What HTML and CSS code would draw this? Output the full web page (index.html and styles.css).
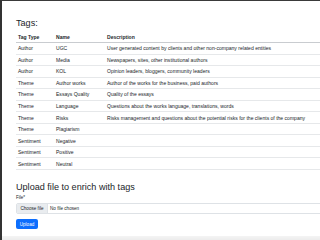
FILE: index.html
```html
<!DOCTYPE html>
<html>
<head>
<meta charset="utf-8">
<link rel="stylesheet" href="styles.css">
</head>
<body>
<div class="frame">
  <main class="page">
    <h3 class="title">Tags:</h3>
    <table class="tags">
      <thead>
        <tr><th>Tag Type</th><th>Name</th><th>Description</th></tr>
      </thead>
      <tbody>
        <tr><td>Author</td><td>UGC</td><td>User generated content by clients and other non-company related entities</td></tr>
        <tr><td>Author</td><td>Media</td><td>Newspapers, sites, other institutional authors</td></tr>
        <tr><td>Author</td><td>KOL</td><td>Opinion leaders, bloggers, community leaders</td></tr>
        <tr><td>Theme</td><td>Author works</td><td>Author of the works for the business, paid authors</td></tr>
        <tr><td>Theme</td><td>Essays Quality</td><td>Quality of the essays</td></tr>
        <tr><td>Theme</td><td>Language</td><td>Questions about the works language, translations, words</td></tr>
        <tr><td>Theme</td><td>Risks</td><td>Risks management and questions about the potential risks for the clients of the company</td></tr>
        <tr><td>Theme</td><td>Plagiarism</td><td></td></tr>
        <tr><td>Sentiment</td><td>Negative</td><td></td></tr>
        <tr><td>Sentiment</td><td>Positive</td><td></td></tr>
        <tr><td>Sentiment</td><td>Neutral</td><td></td></tr>
      </tbody>
    </table>
    <h3 class="title upload-title">Upload file to enrich with tags</h3>
    <form class="upload">
      <label class="label" for="file">File*</label>
      <div class="file-box">
        <span class="file-btn">Choose file</span>
        <span class="file-name">No file chosen</span>
      </div>
      <button class="btn" type="button">Upload</button>
    </form>
  </main>
  <div class="bottom-bar"></div>
</div>
</body>
</html>
```

FILE: styles.css
```css
html, body {
  margin: 0;
  padding: 0;
  width: 320px;
  height: 240px;
  overflow: hidden;
  background: #ffffff;
}
.frame {
  box-sizing: border-box;
  width: 320px;
  height: 240px;
  border-top: 1px solid #3a3a3a;
  border-left: 2px solid #333333;
  display: flex;
  flex-direction: column;
  font-family: "Liberation Sans", Arial, sans-serif;
  color: #212529;
}
.page {
  flex: 1;
  padding: 17px 0 0 14px;
}
.title {
  margin: 0;
  font-size: 9.1px;
  line-height: 11px;
  font-weight: 400;
}
.tags {
  display: grid;
  grid-template-columns: 38px 51px 1fr;
  width: 304px;
  margin-top: 2px;
  font-size: 5.05px;
}
.tags thead, .tags tbody, .tags tr {
  display: contents;
}
.tags th, .tags td {
  display: flex;
  align-items: center;
  padding: 0 2px;
  text-align: left;
  white-space: nowrap;
}
.tags th {
  height: 11px;
  font-weight: 700;
  border-bottom: 1px solid #c9ccd0;
}
.tags td {
  height: 10.55px;
  border-bottom: 1px solid #e6e8ea;
}
.upload-title {
  margin-top: 11.5px;
}
.upload {
  display: flex;
  flex-direction: column;
  align-items: flex-start;
}
.label {
  font-size: 4.5px;
  line-height: 6px;
  margin-top: 2px;
}
.file-box {
  box-sizing: border-box;
  width: 310px;
  height: 11px;
  margin-top: 2.8px;
  border: 1px solid #dee2e6;
  border-radius: 2px;
  display: flex;
  align-items: stretch;
  font-size: 4.6px;
  overflow: hidden;
}
.file-btn {
  display: flex;
  align-items: center;
  padding: 0 3.5px;
  background: #e9ecef;
  border-right: 1px solid #dee2e6;
}
.file-name {
  display: flex;
  align-items: center;
  padding-left: 2px;
}
.btn {
  margin-top: 4.7px;
  width: 22px;
  height: 10.3px;
  padding: 0;
  border: none;
  border-radius: 2px;
  background: #0d6efd;
  color: #ffffff;
  font-family: "Liberation Sans", Arial, sans-serif;
  font-size: 4.6px;
}
.bottom-bar {
  height: 4px;
  background: linear-gradient(#f4f4f4, #ececec);
}
```
